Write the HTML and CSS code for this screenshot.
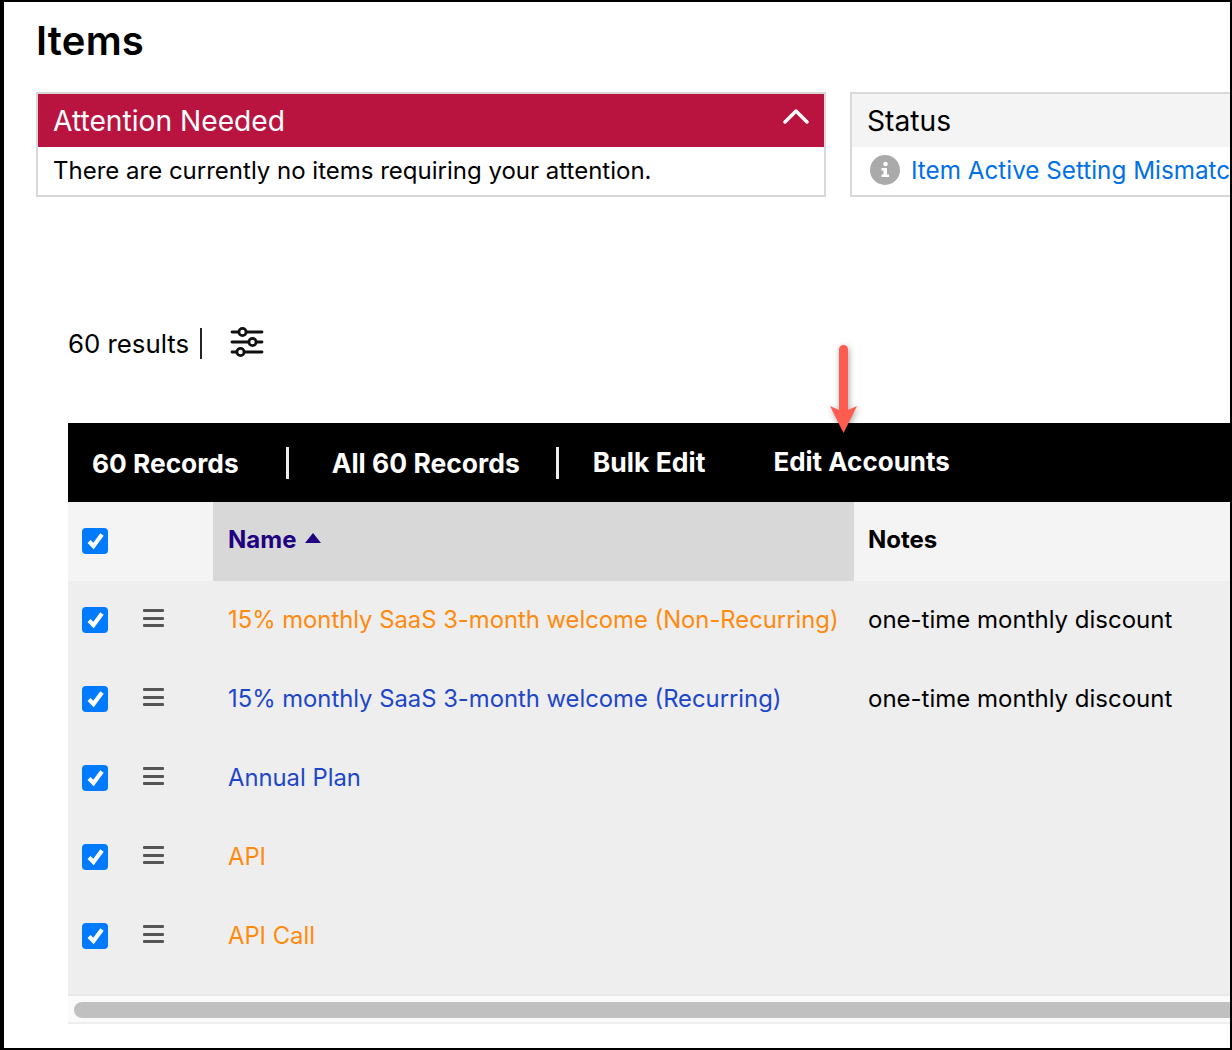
FILE: index.html
```html
<!DOCTYPE html>
<html lang="en">
<head>
    <meta charset="UTF-8">
    <title>Items</title>
    <link rel="stylesheet" href="styles.css">
</head>
<body>
    <div class="frame">
        <h1>Items</h1>
        <div class="cards">
            <div class="card attention">
                <div class="card-head">
                    <span>Attention Needed</span>
                    <svg class="chevron" width="26" height="16" viewBox="0 0 26 16"><path d="M2 14 L13 3 L24 14" fill="none" stroke="#fff" stroke-width="3.4" stroke-linecap="round" stroke-linejoin="round"/></svg>
                </div>
                <div class="card-body">There are currently no items requiring your attention.</div>
            </div>
            <div class="card status">
                <div class="card-head">Status</div>
                <div class="card-body">
                    <svg class="info" width="30" height="30" viewBox="0 0 30 30"><circle cx="15" cy="15" r="15" fill="#aaa"/><circle cx="15.5" cy="9" r="2.3" fill="#fff"/><path d="M11.5 13 H17 V19.5 H19 V22 H11.5 V19.5 H13.5 V15.5 H11.5 Z" fill="#fff"/></svg>
                    <a class="status-link">Item Active Setting Mismatch</a>
                </div>
            </div>
        </div>

        <div class="results">
            <span>60 results</span>
            <span class="results-sep"></span>
            <svg class="filters" width="34" height="32" viewBox="0 0 34 32" fill="none" stroke="#111" stroke-width="2.8">
                <path d="M2 6 H32 M2 16 H32 M2 26 H32" stroke-linecap="round"/>
                <circle cx="12.5" cy="6" r="3.6" fill="#fff"/>
                <circle cx="22.5" cy="16" r="3.6" fill="#fff"/>
                <circle cx="10.5" cy="26" r="3.6" fill="#fff"/>
            </svg>
        </div>

        <div class="table-wrap">
            <div class="toolbar">
                <span class="tool count">60 Records</span>
                <span class="tool-sep"></span>
                <span class="tool all">All 60 Records</span>
                <span class="tool-sep"></span>
                <span class="tool bulk">Bulk Edit</span>
                <span class="tool accounts">Edit Accounts</span>
            </div>
            <div class="grid-row grid-head">
                <div class="cell-check"><span class="check"><svg width="26" height="26" viewBox="0 0 26 26"><path d="M7 13.5 L11.5 18 L20 6.5" fill="none" stroke="#fff" stroke-width="4.2"/></svg></span></div>
                <div class="cell-name sorted">Name <span class="sort-up"></span></div>
                <div class="cell-notes">Notes</div>
            </div>
            <div class="grid-row">
                <div class="cell-check"><span class="check"><svg width="26" height="26" viewBox="0 0 26 26"><path d="M7 13.5 L11.5 18 L20 6.5" fill="none" stroke="#fff" stroke-width="4.2"/></svg></span><span class="handle"><i></i><i></i><i></i></span></div>
                <div class="cell-name"><a class="orange">15% monthly SaaS 3-month welcome (Non-Recurring)</a></div>
                <div class="cell-notes">one-time monthly discount</div>
            </div>
            <div class="grid-row">
                <div class="cell-check"><span class="check"><svg width="26" height="26" viewBox="0 0 26 26"><path d="M7 13.5 L11.5 18 L20 6.5" fill="none" stroke="#fff" stroke-width="4.2"/></svg></span><span class="handle"><i></i><i></i><i></i></span></div>
                <div class="cell-name"><a class="blue">15% monthly SaaS 3-month welcome (Recurring)</a></div>
                <div class="cell-notes">one-time monthly discount</div>
            </div>
            <div class="grid-row">
                <div class="cell-check"><span class="check"><svg width="26" height="26" viewBox="0 0 26 26"><path d="M7 13.5 L11.5 18 L20 6.5" fill="none" stroke="#fff" stroke-width="4.2"/></svg></span><span class="handle"><i></i><i></i><i></i></span></div>
                <div class="cell-name"><a class="blue">Annual Plan</a></div>
                <div class="cell-notes"></div>
            </div>
            <div class="grid-row">
                <div class="cell-check"><span class="check"><svg width="26" height="26" viewBox="0 0 26 26"><path d="M7 13.5 L11.5 18 L20 6.5" fill="none" stroke="#fff" stroke-width="4.2"/></svg></span><span class="handle"><i></i><i></i><i></i></span></div>
                <div class="cell-name"><a class="orange">API</a></div>
                <div class="cell-notes"></div>
            </div>
            <div class="grid-row">
                <div class="cell-check"><span class="check"><svg width="26" height="26" viewBox="0 0 26 26"><path d="M7 13.5 L11.5 18 L20 6.5" fill="none" stroke="#fff" stroke-width="4.2"/></svg></span><span class="handle"><i></i><i></i><i></i></span></div>
                <div class="cell-name"><a class="orange">API Call</a></div>
                <div class="cell-notes"></div>
            </div>
            <div class="grid-foot"></div>
            <div class="scroll-track"><div class="scroll-thumb"></div></div>
        </div>

        <svg class="callout" width="42" height="100" viewBox="0 0 42 100">
            <path d="M20.5 8.5 V75" fill="none" stroke="#ff5c50" stroke-width="9" stroke-linecap="round"/>
            <path d="M7 65 L20.5 71 L34 65 L20.5 92 Z" fill="#ff5c50"/>
        </svg>
    </div>
</body>
</html>
```

FILE: styles.css
```css
* {
    box-sizing: border-box;
}
body {
    margin: 0;
    font-family: Inter, "Liberation Sans", sans-serif;
    background-color: white;
    color: #000;
}
.frame {
    position: relative;
    width: 1232px;
    height: 1050px;
    overflow: hidden;
    border-style: solid;
    border-color: #000;
    border-width: 2px 2px 2px 4px;
    padding-left: 32px;
}
h1 {
    margin: 0;
    height: 90px;
    padding-top: 14px;
    font-size: 40px;
    line-height: 50px;
    font-weight: 600;
    letter-spacing: 0.2px;
}
.cards {
    display: flex;
    gap: 24px;
    width: 1400px;
}
.card {
    border: 2px solid #d8d8d8;
    height: 105px;
}
.attention {
    width: 790px;
}
.status {
    width: 500px;
}
.card-head {
    height: 53px;
    padding: 1px 15px 0;
    display: flex;
    align-items: center;
    justify-content: space-between;
    font-size: 28.2px;
    background-color: #f4f4f4;
}
.attention .card-head {
    background-color: #b91440;
    color: white;
}
.chevron {
    margin: 0 0 11px 0;
}
.card-body {
    height: 48px;
    padding: 0 15px 2px;
    display: flex;
    align-items: center;
    font-size: 24px;
}
.status .card-body {
    padding-left: 18px;
    gap: 11px;
    font-size: 24.25px;
}
.status-link {
    color: #0070e8;
    white-space: nowrap;
}
.results {
    display: flex;
    align-items: center;
    margin: 128px 0 0 32px;
    height: 36px;
    font-size: 25.8px;
}
.results-sep {
    width: 2px;
    height: 31px;
    margin: 0 28px 0 11px;
    background-color: #222;
}
.filters {
    margin-bottom: 3px;
}
.table-wrap {
    margin: 62px 0 0 32px;
    width: 1400px;
}
.toolbar {
    height: 79px;
    background-color: #000;
    color: white;
    display: flex;
    align-items: center;
    font-size: 26.5px;
    font-weight: 700;
}
.tool {
    white-space: nowrap;
}
.count {
    margin-left: 24px;
    margin-top: 1px;
    font-size: 26.3px;
}
.all {
    margin-top: 1px;
}
.tool-sep {
    width: 3px;
    height: 32px;
    background-color: #eee;
}
.count + .tool-sep {
    margin: 0 43px 0 47px;
}
.all + .tool-sep {
    margin: 0 34px 0 36px;
}
.bulk {
    margin-bottom: 2px;
}
.accounts {
    margin: 0 0 2px 68px;
    font-size: 26px;
}
.grid-row {
    display: grid;
    grid-template-columns: 145px 641px 1fr;
    height: 79px;
    background-color: #eee;
    font-size: 24px;
}
.grid-row > div {
    display: flex;
    align-items: center;
}
.grid-head {
    background-color: #f4f4f4;
    font-weight: 700;
}
.cell-check {
    padding-left: 14px;
}
.cell-name {
    padding: 0 0 2px 15px;
    white-space: nowrap;
}
.cell-notes {
    padding: 0 0 2px 14px;
    white-space: nowrap;
}
.grid-head .cell-name,
.grid-head .cell-notes {
    padding-bottom: 4px;
}
.sorted {
    background-color: #d8d8d8;
    color: #1f0080;
    gap: 9px;
}
.sort-up {
    width: 0;
    height: 0;
    margin-bottom: 4px;
    border-left: 8px solid transparent;
    border-right: 8px solid transparent;
    border-bottom: 10px solid #1f0080;
}
.check {
    width: 26px;
    height: 26px;
    margin-top: -1px;
    border-radius: 4px;
    background-color: #007aff;
    display: flex;
}
.handle {
    width: 21px;
    height: 18px;
    margin: -5px 0 0 35px;
    display: flex;
    flex-direction: column;
    justify-content: space-between;
}
.handle i {
    display: block;
    height: 3px;
    border-radius: 1px;
    background-color: #555;
}
.orange {
    color: #ff8a0d;
    font-size: 23.8px;
}
.blue {
    color: #1e46c8;
    font-size: 23.8px;
}
.grid-foot {
    height: 20px;
    background-color: #eee;
    border-bottom: 2px solid #e8e8e8;
}
.scroll-track {
    height: 28px;
    padding: 6px 6px 0;
    background-color: #fafafa;
    border-bottom: 2px solid #eee;
}
.scroll-thumb {
    height: 16px;
    border-radius: 8px;
    background-color: #c0c0c0;
}
.callout {
    position: absolute;
    left: 819px;
    top: 339px;
    filter: drop-shadow(1px 2px 3px rgba(0,0,0,0.35));
}
```
